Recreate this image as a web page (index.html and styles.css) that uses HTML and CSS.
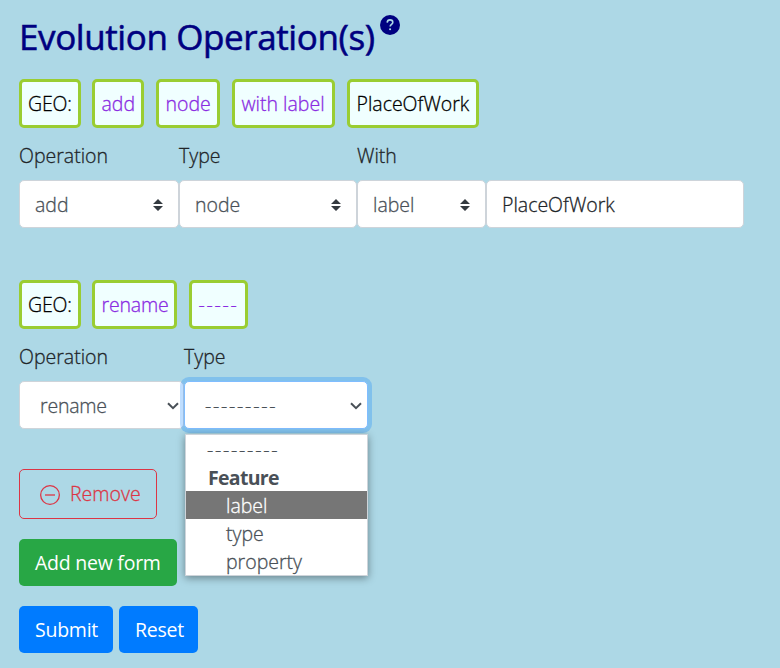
FILE: index.html
```
<!DOCTYPE html>
<html lang="en">
<head>
<meta charset="utf-8">
<title>Evolution Operations</title>
<link rel="stylesheet" href="styles.css">
</head>
<body>
<main>
  <header class="heading">
    <h1>Evolution Operation(s)</h1>
    <svg class="help" viewBox="0 0 20 20"><circle cx="10" cy="10" r="10" fill="#000080"/><path d="M7.2 7.6C7.3 5.8 8.4 4.9 10 4.9s2.8.9 2.8 2.4c0 2.1-2.6 2.1-2.6 4.3" fill="none" stroke="#add8e6" stroke-width="1.6"/><circle cx="10.1" cy="14.3" r="1.05" fill="#add8e6"/></svg>
  </header>

  <section class="operation first">
    <div class="tags">
      <span class="tag dark geo">GEO:</span>
      <span class="tag add">add</span>
      <span class="tag node">node</span>
      <span class="tag with">with label</span>
      <span class="tag dark place">PlaceOfWork</span>
    </div>
    <div class="fields">
      <div class="field operation-field"><label>Operation</label>
        <div class="control"><span>add</span><svg class="sort" viewBox="0 0 10 12"><path d="M0 5 5 0l5 5zM0 7h10l-5 5z" fill="#343a40"/></svg></div></div>
      <div class="field type-field"><label>Type</label>
        <div class="control"><span>node</span><svg class="sort" viewBox="0 0 10 12"><path d="M0 5 5 0l5 5zM0 7h10l-5 5z" fill="#343a40"/></svg></div></div>
      <div class="field with-field"><label>With</label>
        <div class="control"><span>label</span><svg class="sort" viewBox="0 0 10 12"><path d="M0 5 5 0l5 5zM0 7h10l-5 5z" fill="#343a40"/></svg></div></div>
      <div class="field value-field"><div class="control value"><span class="place-text">PlaceOfWork</span></div></div>
    </div>
  </section>

  <section class="operation second">
    <div class="tags">
      <span class="tag dark geo">GEO:</span>
      <span class="tag rename">rename</span>
      <span class="tag dashes">-----</span>
    </div>
    <div class="fields">
      <div class="field rename-field"><label>Operation</label>
        <div class="control native"><span>rename</span><svg class="chevron" viewBox="0 0 12 8"><path d="m1 1.2 5 5 5-5" fill="none" stroke="#495057" stroke-width="2"/></svg></div></div>
      <div class="field focus-field"><label>Type</label>
        <div class="control native focused"><span class="blank">---------</span><svg class="chevron" viewBox="0 0 12 8"><path d="m1 1.2 5 5 5-5" fill="none" stroke="#495057" stroke-width="2"/></svg></div>
        <ul class="menu">
          <li class="blank">---------</li>
          <li class="group">Feature</li>
          <li class="option selected">label</li>
          <li class="option">type</li>
          <li class="option property">property</li>
        </ul>
      </div>
    </div>
  </section>

  <div class="actions">
    <button class="button remove"><svg viewBox="0 0 20 20"><g fill="none" stroke="#dc3545" stroke-width="1.3"><circle cx="10" cy="10" r="9.35"/><path d="M5 10h10"/></g></svg><span>Remove</span></button>
    <button class="button new">Add new form</button>
    <div class="submit-row">
      <button class="button submit">Submit</button>
      <button class="button reset">Reset</button>
    </div>
  </div>
</main>
</body>
</html>
```
FILE: styles.css
```
* { box-sizing: border-box; }
body {
  margin: 0;
  height: 668px;
  overflow: hidden;
  background: #add8e6;
  color: #212529;
  font: 300 19.5px/30px "Open Sans", "Noto Sans", sans-serif;
  -webkit-text-stroke: .3px currentColor;
}
main { padding: 15px 19px 0; }
.heading { display: flex; height: 64px; }
h1 {
  margin: 0;
  color: #000080;
  font-size: 35px;
  font-weight: 400;
  line-height: 44px;
  letter-spacing: -.4px;
  -webkit-text-stroke: .55px currentColor;
  white-space: nowrap;
  width: 361px;
}
.help { width: 20px; height: 20px; }
.operation { height: 201px; }
.second { height: 189px; }
.tags { display: flex; gap: 12px; }
.tag {
  height: 49px;
  flex: none;
  border: 3px solid #9acd32;
  border-radius: 5px;
  background: #f0ffff;
  color: #8a2be2;
  line-height: 44px;
  padding-left: 6.5px;
  white-space: nowrap;
}
.dark { color: #000; }
.geo { width: 62px; margin-right: -1px; padding-left: 6px; letter-spacing: -.2px; }
.add { width: 52px; }
.node { width: 64px; }
.with { width: 103px; }
.place { width: 132px; }
.rename { width: 85px; letter-spacing: -.15px; }
.dashes { width: 59px; letter-spacing: 1.75px; }
.fields { display: flex; margin-top: 13px; align-items: flex-end; }
.field { position: relative; }
label { display: block; height: 39px; }
.operation-field { width: 160px; }
.type-field { width: 178px; }
.with-field { width: 129px; }
.value-field { width: 258px; }
.rename-field { width: 165px; }
.focus-field { width: 184px; }
.control {
  height: 48px;
  display: flex;
  align-items: center;
  justify-content: space-between;
  padding: 1px 15px 0;
  border: 1px solid #ced4da;
  border-radius: 5px;
  background: #fff;
  color: #495057;
}
.value { color: #212529; }
.sort { width: 10px; height: 12px; }
.native { padding: 2px 4px 0 20px; }
.native span { letter-spacing: -.2px; }
.chevron { width: 12px; height: 8px; margin-top: -1px; }
.focused { border-color: #80bdff; box-shadow: 0 0 0 4px rgba(0, 123, 255, .25); padding-right: 5px; }
.blank, .native .blank { letter-spacing: 1.75px; }
.menu {
  position: absolute;
  z-index: 2;
  top: 92px;
  left: 1px;
  width: 183px;
  height: 142px;
  margin: 0;
  padding: 0;
  list-style: none;
  border: 1px solid #ced4da;
  background: #fff;
  box-shadow: 0 2px 8px rgba(0, 0, 0, .4);
  color: #495057;
  line-height: 29px;
}
.menu li { height: 28px; padding-left: 21px; }
.menu .group { font-weight: 700; padding-left: 22px; letter-spacing: -.7px; -webkit-text-stroke: 0; }
.menu .option { padding-left: 40px; }
.menu .selected { background: #767676; color: #fff; }
.actions { display: flex; flex-direction: column; align-items: flex-start; gap: 20px; }
.button {
  height: 47px;
  border: 0;
  border-radius: 5px;
  color: #fff;
  font: 400 19.5px/30px "Open Sans", "Noto Sans", sans-serif;
  letter-spacing: -.25px;
  -webkit-text-stroke: 0;
  padding: 0 0 0 16px;
  text-align: left;
  white-space: nowrap;
}
.remove {
  display: flex;
  align-items: center;
  width: 138px;
  height: 50px;
  border: 1px solid #dc3545;
  background: transparent;
  color: #dc3545;
  font-weight: 300;
  -webkit-text-stroke: .3px currentColor;
  padding: 0 0 1px 20px;
}
.remove svg { width: 20px; height: 20px; margin: 3px 10px 0 0; }
.remove span { letter-spacing: 0; }
.new { width: 158px; background: #28a745; }
.submit-row { display: flex; gap: 6px; }
.submit { width: 94px; background: #007bff; }
.reset { width: 79px; background: #007bff; }
```
